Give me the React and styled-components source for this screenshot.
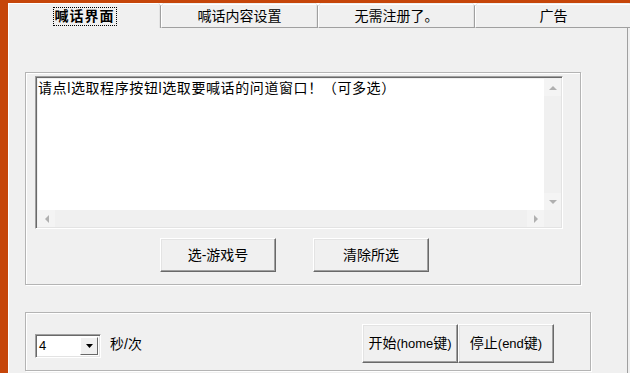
import React from "react";
import styled, { createGlobalStyle } from "styled-components";

const Global = createGlobalStyle`
  html, body { margin: 0; padding: 0; background: #f0f0f0; }
  * { box-sizing: border-box; }
`;

const ORANGE = "#c6460a";
const FONT = `"Liberation Sans", "Noto Sans CJK SC", sans-serif`;

const Frame = styled.div`
  width: 630px;
  height: 373px;
  overflow: hidden;
  border-left: 8px solid ${ORANGE};
  border-top: 3px solid ${ORANGE};
  background: #f0f0f0;
  display: flex;
  flex-direction: column;
  font-family: ${FONT};
  font-size: 14px;
  color: #000;
`;

const TabRow = styled.div`
  display: flex;
  height: 25px;
  flex: none;
  position: relative;
`;

const Tab = styled.div`
  position: relative;
  flex: none;
  width: ${(p) => p.$w}px;
  height: ${(p) => (p.$active ? 25 : 24)}px;
  margin-top: ${(p) => (p.$active ? 0 : 1)}px;
  background: #f0f0f0;
  border-top: 1px solid #fff;
  border-left: 1px solid #fff;
  border-right: 1px solid #a0a0a0;
  box-shadow: inset -1px 0 0 #e3e3e3;
  border-bottom: ${(p) => (p.$active ? "none" : "1px solid #a0a0a0")};
  display: flex;
  align-items: center;
  justify-content: center;
  padding-top: ${(p) => (p.$active ? 1 : 0)}px;
  font-weight: ${(p) => (p.$active ? 700 : 400)};
  line-height: 17px;
  &::after {
    content: "";
    position: absolute;
    right: -5px;
    top: ${(p) => (p.$active ? -3 : -4)}px;
    width: 0;
    height: 0;
    border-left: 4px solid transparent;
    border-right: 4px solid transparent;
    border-top: 5px solid #fff;
    filter: drop-shadow(0 0 0.5px #888);
    z-index: 2;
  }
`;

const Focus = styled.span`
  outline: 1px dotted #000;
  outline-offset: 0px;
  padding: 0 1px;
  letter-spacing: 1px;
`;

const Panel = styled.div`
  flex: 1;
  background: #f0f0f0;
  border-left: 1px solid #fff;
  width: 620px;
  border-right: 1px solid #a0a0a0;
  padding: 44px 0 0 16px;
  display: flex;
  flex-direction: column;
`;

const Group = styled.div`
  width: ${(p) => p.$w}px;
  height: ${(p) => p.$h}px;
  margin-top: ${(p) => p.$mt || 0}px;
  border: 1px solid #b4b4b4;
  box-shadow: inset 1px 1px 0 #fff, 1px 1px 0 #fff;
  flex: none;
`;

const MainGroup = styled(Group)`
  padding: 3px 0 0 9px;
  display: flex;
  flex-direction: column;
`;

const ListBox = styled.div`
  width: 528px;
  height: 153px;
  border-top: 1px solid #a0a0a0;
  border-left: 1px solid #a0a0a0;
  border-right: 1px solid #fff;
  border-bottom: 1px solid #fff;
  box-shadow: inset 1px 1px 0 #696969, inset -1px -1px 0 #e3e3e3;
  padding: 2px 1px 1px 2px;
  display: grid;
  grid-template-columns: 1fr 17px;
  grid-template-rows: 1fr 17px;
`;

const ListContent = styled.div`
  background: #fff;
  padding: 1px 0 0 0;
  line-height: 17px;
  letter-spacing: 0.6px;
  white-space: nowrap;
  overflow: hidden;
`;

const VScroll = styled.div`
  background: #f0f0f0;
  display: flex;
  flex-direction: column;
  justify-content: space-between;
`;

const HScroll = styled.div`
  background: #f0f0f0;
  display: flex;
  justify-content: space-between;
`;

const Corner = styled.div`
  background: #f0f0f0;
`;

const ArrowBtn = styled.div`
  width: 17px;
  height: 17px;
  background: #f4f4f4;
  display: flex;
  align-items: center;
  justify-content: center;
  flex: none;
`;

const Arrow = ({ dir }) => {
  const pts = {
    up: "1,5 5,1 9,5",
    down: "1,1 5,5 9,1",
    left: "5,1 1,5 5,9",
    right: "1,1 5,5 1,9",
  }[dir];
  const vertical = dir === "up" || dir === "down";
  return (
    <svg
      width={vertical ? 10 : 6}
      height={vertical ? 6 : 10}
      viewBox={vertical ? "0 0 10 6" : "0 0 6 10"}
    >
      <polygon points={pts} fill="#b0b0b0" />
    </svg>
  );
};

const ButtonRow = styled.div`
  display: flex;
  gap: 37px;
  margin: 9px 0 0 125px;
`;

const Button = styled.div`
  width: ${(p) => p.$w}px;
  height: ${(p) => p.$h}px;
  background: #f0f0f0;
  border-top: 1px solid #fff;
  border-left: 1px solid #fff;
  border-right: 1px solid #696969;
  border-bottom: 1px solid #696969;
  box-shadow: inset -1px -1px 0 #a0a0a0, inset 1px 1px 0 #e3e3e3;
  display: flex;
  align-items: center;
  justify-content: center;
  line-height: 17px;
  white-space: nowrap;
  flex: none;
`;

const Ascii = styled.span`
  font-size: 13px;
`;

const BottomGroup = styled(Group)`
  padding: 11px 36px 0 9px;
  display: flex;
  align-items: flex-start;
`;

const Combo = styled.div`
  width: 66px;
  height: 24px;
  margin-top: 10px;
  border-top: 1px solid #a0a0a0;
  border-left: 1px solid #a0a0a0;
  border-right: 1px solid #fff;
  border-bottom: 1px solid #fff;
  box-shadow: inset 1px 1px 0 #696969, inset -1px -1px 0 #e3e3e3;
  padding: 2px;
  display: flex;
  background: #fff;
  flex: none;
`;

const ComboValue = styled.div`
  flex: 1;
  padding-left: 1px;
  line-height: 18px;
  font-size: 13px;
`;

const ComboButton = styled.div`
  width: 18px;
  background: #f0f0f0;
  border-top: 1px solid #fff;
  border-left: 1px solid #fff;
  border-right: 1px solid #696969;
  border-bottom: 1px solid #696969;
  display: flex;
  align-items: center;
  justify-content: center;
`;

const Label = styled.div`
  margin: 12px 0 0 9px;
  line-height: 17px;
`;

const Actions = styled.div`
  margin-left: auto;
  display: flex;
`;

export default function App() {
  return (
    <>
      <Global />
      <Frame>
        <TabRow>
          <Tab $w={153} $active>
            <Focus>喊话界面</Focus>
          </Tab>
          <Tab $w={157}>喊话内容设置</Tab>
          <Tab $w={157}>无需注册了。</Tab>
          <Tab $w={157}>广告</Tab>
        </TabRow>
        <Panel>
          <MainGroup $w={556} $h={213}>
            <ListBox>
              <ListContent>请点l选取程序按钮l选取要喊话的问道窗口！（可多选）</ListContent>
              <VScroll>
                <ArrowBtn>
                  <Arrow dir="up" />
                </ArrowBtn>
                <ArrowBtn>
                  <Arrow dir="down" />
                </ArrowBtn>
              </VScroll>
              <HScroll>
                <ArrowBtn>
                  <Arrow dir="left" />
                </ArrowBtn>
                <ArrowBtn>
                  <Arrow dir="right" />
                </ArrowBtn>
              </HScroll>
              <Corner />
            </ListBox>
            <ButtonRow>
              <Button $w={116} $h={34}>选-游戏号</Button>
              <Button $w={116} $h={34}>清除所选</Button>
            </ButtonRow>
          </MainGroup>
          <BottomGroup $w={566} $h={59} $mt={27}>
            <Combo>
              <ComboValue>4</ComboValue>
              <ComboButton>
                <svg width="7" height="4" viewBox="0 0 7 4">
                  <polygon points="0,0 7,0 3.5,4" fill="#000" />
                </svg>
              </ComboButton>
            </Combo>
            <Label>秒/次</Label>
            <Actions>
              <Button $w={96} $h={39}>
                开始<Ascii>(home</Ascii>键<Ascii>)</Ascii>
              </Button>
              <Button $w={96} $h={39}>
                停止<Ascii>(end</Ascii>键<Ascii>)</Ascii>
              </Button>
            </Actions>
          </BottomGroup>
        </Panel>
      </Frame>
    </>
  );
}
